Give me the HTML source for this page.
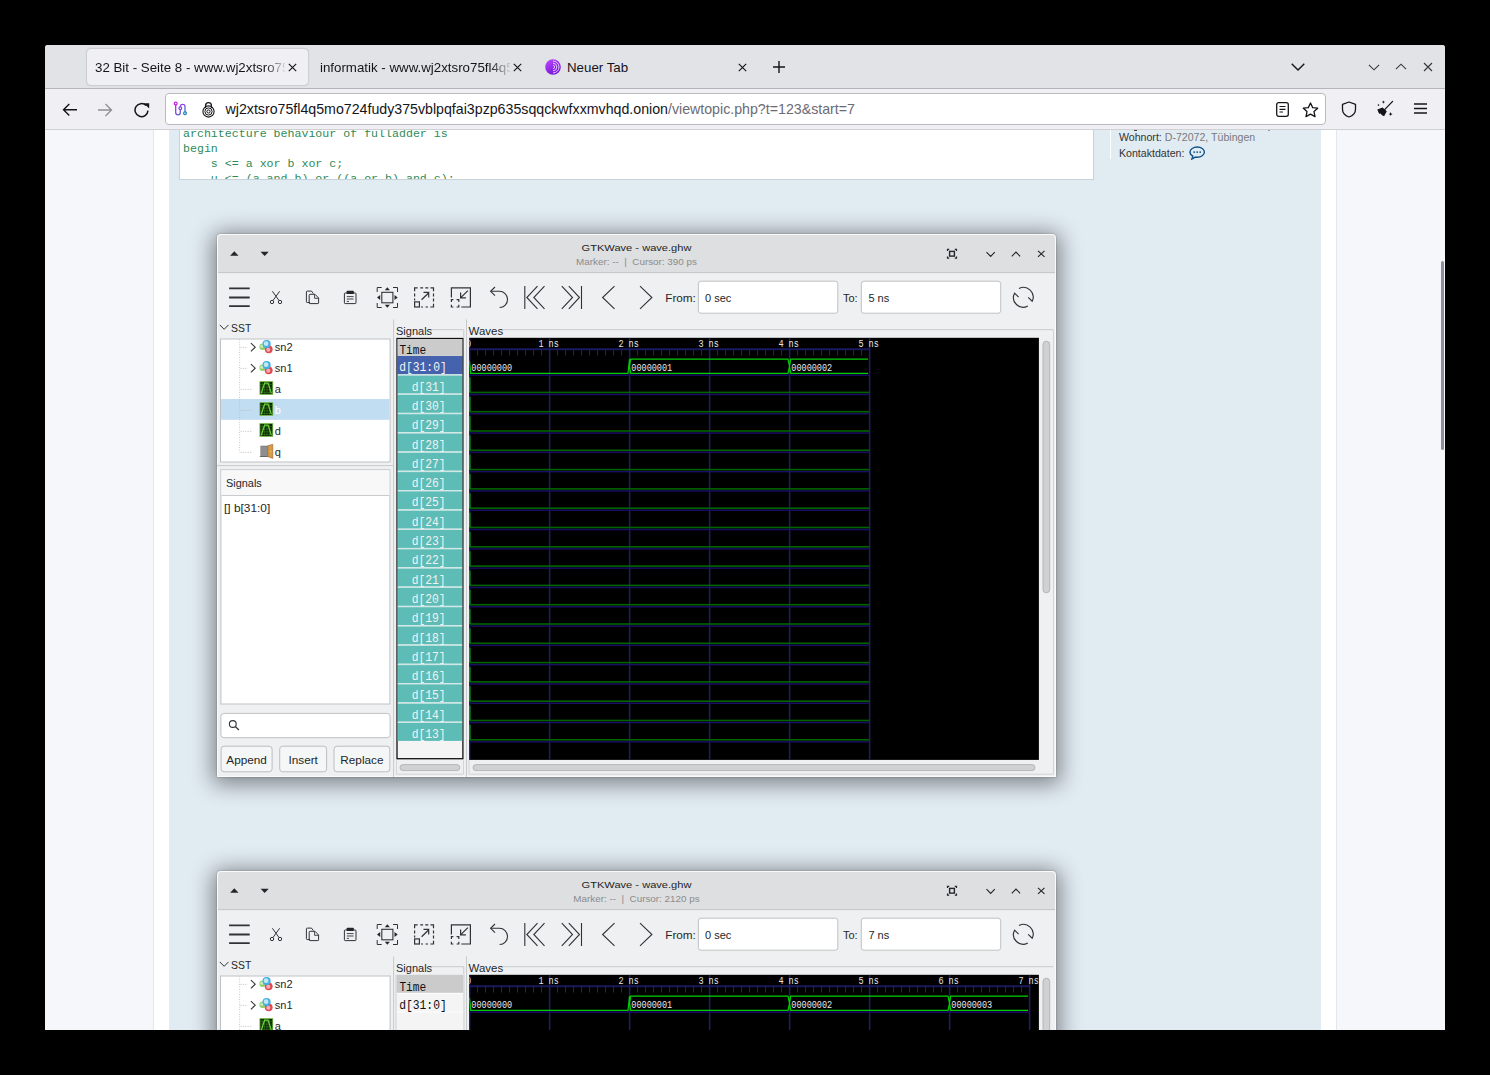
<!DOCTYPE html>
<html><head><meta charset="utf-8">
<style>
*{box-sizing:border-box}
html,body{margin:0;padding:0;width:1490px;height:1075px;overflow:hidden;background:#000}
body{font-family:"Liberation Sans",sans-serif;position:relative}
.a{position:absolute}
#win{left:45px;top:45px;width:1400px;height:985px;background:#f0f0f4;border-radius:3px 3px 0 0;overflow:hidden}
#tabs{left:0;top:0;width:1400px;height:44px;background:#e2e3e6;border-bottom:1px solid #b4b4ba;box-shadow:0 1px 1px rgba(0,0,0,.08)}
.tab{font-size:13.3px;color:#15141a;white-space:nowrap}
#act{left:42px;top:4px;width:221px;height:36px;background:#f0f0f4;border-radius:4px;box-shadow:0 0 2px rgba(0,0,0,.35)}
#tb{left:0;top:44px;width:1400px;height:41px;background:#f0f0f4;border-bottom:1px solid #cfcfd4}
#url{left:119.5px;top:4px;width:1161px;height:32px;background:#fff;border:1px solid #b9b9c0;border-radius:4px}
#page{left:0;top:85px;width:1400px;height:900px;background:#f5f7fa;overflow:hidden}
#wrap{left:108px;top:0;width:1184px;height:900px;background:#fff;border-left:1px solid #e3e6ea;border-right:1px solid #e3e6ea}
#post{left:124px;top:0;width:1152px;height:900px;background:#e1ebf2}
#code{left:134px;top:-10px;width:915px;height:60px;background:#fff;border:1px solid #c9d2d8;padding:5.4px 0 0 3px;font-family:"Liberation Mono",monospace;font-size:11.62px;color:#2e8b57;line-height:15px;white-space:pre;overflow:hidden}
.sb{left:1396px;top:131px;width:3px;height:189px;background:#8f8f9d;border-radius:2px}
</style></head><body>
<div id="win" class="a">
  <div id="tabs" class="a">
    <div id="act" class="a"></div>
    <div class="a tab" style="left:50px;top:15px;width:190px;overflow:hidden;-webkit-mask-image:linear-gradient(90deg,#000 170px,transparent 192px)">32 Bit - Seite 8 - www.wj2xtsro75fl4q5mo724</div>
    <svg class="a" style="left:243px;top:18px" width="9" height="9" viewBox="0 0 9 9"><path d="M0.8 0.8L8.2 8.2M8.2 0.8L0.8 8.2" stroke="#15141a" stroke-width="1.15"/></svg>
    <div class="a tab" style="left:275px;top:15px;width:190px;overflow:hidden;-webkit-mask-image:linear-gradient(90deg,#000 170px,transparent 192px)">informatik - www.wj2xtsro75fl4q5mo724</div>
    <svg class="a" style="left:467.5px;top:18px" width="9" height="9" viewBox="0 0 9 9"><path d="M0.8 0.8L8.2 8.2M8.2 0.8L0.8 8.2" stroke="#15141a" stroke-width="1.15"/></svg>
    <svg class="a" style="left:500px;top:14px" width="16" height="16" viewBox="0 0 16 16"><defs><linearGradient id="tg" x1="0" y1="0" x2="0.6" y2="1"><stop offset="0" stop-color="#c04cff"/><stop offset="1" stop-color="#7414d8"/></linearGradient></defs><circle cx="8" cy="8" r="7.8" fill="url(#tg)"/><path d="M8 2A6 6 0 0 1 8 14M8 4.2A3.8 3.8 0 0 1 8 11.8M8 6.4A1.6 1.6 0 0 1 8 9.6" fill="none" stroke="#e8c8ff" stroke-width="1"/></svg>
    <div class="a tab" style="left:522px;top:15px">Neuer Tab</div>
    <svg class="a" style="left:692.5px;top:18px" width="9" height="9" viewBox="0 0 9 9"><path d="M0.8 0.8L8.2 8.2M8.2 0.8L0.8 8.2" stroke="#15141a" stroke-width="1.15"/></svg>
    <svg class="a" style="left:728px;top:16px" width="12" height="12" viewBox="0 0 12 12"><path d="M6 0V12M0 6H12" stroke="#15141a" stroke-width="1.4"/></svg>
    <svg class="a" style="left:1246px;top:18px" width="14" height="8" viewBox="0 0 14 8"><path d="M0.7 0.7L7 7L13.3 0.7" fill="none" stroke="#15141a" stroke-width="1.4"/></svg>
    <svg class="a" style="left:1323px;top:19px" width="12" height="7" viewBox="0 0 12 7"><path d="M0.9 0.9L6 5.8L11.1 0.9" fill="none" stroke="#3a3a3a" stroke-width="1.15"/></svg>
    <svg class="a" style="left:1350px;top:18px" width="12" height="7" viewBox="0 0 12 7"><path d="M0.9 6.1L6 1.2L11.1 6.1" fill="none" stroke="#3a3a3a" stroke-width="1.15"/></svg>
    <svg class="a" style="left:1378px;top:17px" width="10" height="10" viewBox="0 0 10 10"><path d="M1 1L9 9M9 1L1 9" stroke="#3a3a3a" stroke-width="1.15"/></svg>
  </div>
  <div id="tb" class="a">
    <svg class="a" style="left:16.5px;top:14px" width="16" height="14" viewBox="0 0 16 14"><path d="M15 6.8H1.5M7.3 1L1.5 6.8L7.3 12.6" fill="none" stroke="#15141a" stroke-width="1.4"/></svg>
    <svg class="a" style="left:52px;top:14px" width="16" height="14" viewBox="0 0 16 14"><path d="M1 7H14.5M8.5 1L14.5 7L8.5 13" fill="none" stroke="#8e8e93" stroke-width="1.3"/></svg>
    <svg class="a" style="left:88.5px;top:13px" width="16" height="16" viewBox="0 0 16 16"><path d="M14 8.6A6.5 6.5 0 1 1 12.2 3.6" fill="none" stroke="#15141a" stroke-width="1.5"/><path d="M9.8 1.2L15.2 1.2L15.2 6.6Z" fill="#15141a"/></svg>
    <div id="url" class="a">
      <svg class="a" style="left:7.5px;top:7px" width="16" height="16" viewBox="0 0 16 16"><defs><linearGradient id="cg" x1="0" y1="0" x2="1" y2="1"><stop offset="0" stop-color="#c81ee0"/><stop offset="0.5" stop-color="#7d4ee0"/><stop offset="1" stop-color="#1a7fc0"/></linearGradient></defs><path d="M2.7 3.5V11.5A2.3 2.3 0 0 0 7.3 11.5V5.2A2.4 2.4 0 0 1 12 5.2V11.5" fill="none" stroke="url(#cg)" stroke-width="1.3"/><circle cx="2.7" cy="2.5" r="1.4" fill="#fff" stroke="#c81ee0" stroke-width="1.2"/><circle cx="7.3" cy="7.3" r="1.4" fill="#fff" stroke="#7d4ee0" stroke-width="1.2"/><circle cx="12" cy="12.2" r="1.4" fill="#fff" stroke="#1a7fc0" stroke-width="1.2"/></svg>
      <svg class="a" style="left:36px;top:6.5px" width="13" height="17" viewBox="0 0 13 17"><path d="M3.6 7V4.5A2.9 2.9 0 0 1 9.4 4.5V7" fill="none" stroke="#15141a" stroke-width="1.3"/><circle cx="6.5" cy="10.5" r="5.6" fill="none" stroke="#15141a" stroke-width="1.1"/><circle cx="6.5" cy="10.5" r="3.6" fill="none" stroke="#15141a" stroke-width="1"/><circle cx="6.5" cy="10.5" r="1.6" fill="none" stroke="#15141a" stroke-width="1"/></svg>
      <div class="a" style="left:60px;top:7px;font-size:14.2px;color:#15141a;white-space:nowrap">wj2xtsro75fl4q5mo724fudy375vblpqfai3pzp635sqqckwfxxmvhqd.onion<span style="color:#6b6b74">/viewtopic.php?t=123&amp;start=7</span></div>
      <svg class="a" style="left:1110px;top:7.5px" width="13" height="15" viewBox="0 0 13 15"><rect x="0.7" y="0.7" width="11.6" height="13.6" rx="2" fill="none" stroke="#15141a" stroke-width="1.3"/><path d="M3.5 4.5H9.5M3.5 7.3H9.5M3.5 10H7" stroke="#15141a" stroke-width="1.2"/></svg>
      <svg class="a" style="left:1136px;top:7.5px" width="17" height="16" viewBox="0 0 17 16"><path d="M8.5 1L10.7 5.6L15.7 6.2L12 9.6L13 14.6L8.5 12.1L4 14.6L5 9.6L1.3 6.2L6.3 5.6Z" fill="none" stroke="#15141a" stroke-width="1.3" stroke-linejoin="round"/></svg>
    </div>
    <svg class="a" style="left:1296px;top:11.5px" width="16" height="17" viewBox="0 0 16 17"><path d="M8 1L14.5 3.3V8.2C14.5 12 11.5 14.8 8 16C4.5 14.8 1.5 12 1.5 8.2V3.3Z" fill="none" stroke="#15141a" stroke-width="1.3" stroke-linejoin="round"/></svg>
    <svg class="a" style="left:1331px;top:11px" width="18" height="18" viewBox="0 0 18 18"><path d="M16.6 1.4L8.6 9.6" stroke="#15141a" stroke-width="1.3" stroke-linecap="round"/><path d="M1.3 9.6L6.6 7.4L10.8 11.3L8.1 16.2L5.6 15L4.9 13.6L3.6 14L2.5 12.4Z" fill="#15141a"/><path d="M7.4 0.4L7.9 1.6L9.1 2.1L7.9 2.6L7.4 3.8L6.9 2.6L5.7 2.1L6.9 1.6Z M14.6 12.1L15.2 13.5L16.6 14.1L15.2 14.7L14.6 16.1L14 14.7L12.6 14.1L14 13.5Z" fill="#15141a"/><circle cx="2.5" cy="5.1" r="0.8" fill="#15141a"/></svg>
    <svg class="a" style="left:1369px;top:14px" width="13" height="11" viewBox="0 0 13 11"><path d="M0 1H13M0 5.5H13M0 10H13" stroke="#15141a" stroke-width="1.3"/></svg>
  </div>
  <div id="page" class="a">
    <div id="wrap" class="a"></div>
    <div id="post" class="a"></div>
    <div id="code" class="a">architecture behaviour of fulladder is
begin
    s &lt;= a xor b xor c;
    u &lt;= (a and b) or ((a or b) and c);
end behaviour;</div>
    <div class="a" style="left:1065px;top:0;width:1px;height:28.6px;background:#fff"></div><div class="a" style="left:1088.5px;top:0;width:3.5px;height:1.2px;background:#444"></div><div class="a" style="left:1223px;top:0;width:2px;height:1px;background:#999"></div>
    <div class="a" style="left:1074px;top:1.3px;font-size:10.6px;color:#333;white-space:nowrap;line-height:12px">Wohnort: <span style="color:#7a7a7a">D-72072, Tübingen</span></div>
    <div class="a" style="left:1074px;top:17.3px;font-size:10.6px;color:#333;white-space:nowrap;line-height:12px">Kontaktdaten:</div>
    <svg class="a" style="left:1143.5px;top:16px" width="17" height="14" viewBox="0 0 17 14"><path d="M8.2 1C4.3 1 1 3.3 1 6.1C1 7.8 2.1 9.3 3.8 10.2L2.9 13L6.4 11.1C7 11.2 7.6 11.3 8.2 11.3C12.1 11.3 15.4 9 15.4 6.1C15.4 3.3 12.1 1 8.2 1Z" fill="none" stroke="#105289" stroke-width="1.4"/><circle cx="5.2" cy="6.1" r="0.95" fill="#105289"/><circle cx="8.2" cy="6.1" r="0.95" fill="#105289"/><circle cx="11.2" cy="6.1" r="0.95" fill="#105289"/></svg>
    <div class="a sb"></div>
  </div>
</div>


<div class="a" style="left:45px;top:130px;width:1400px;height:900px;overflow:hidden"><div class="a" style="left:-45px;top:-130px;width:1490px;height:1075px"><div class="a" style="left:217px;top:234px;width:839px;height:543px;background:#eff0f1;box-shadow:0 0 2px rgba(0,0,0,.35),0 3px 22px 4px rgba(0,0,0,.45);border-radius:4px 4px 0 0"></div>
<svg class="a" style="left:217px;top:234px" width="839" height="543" viewBox="0 0 839 543"><path d="M0 4A4 4 0 0 1 4 0H835A4 4 0 0 1 839 4V38.6H0Z" fill="#dedfe0"/><rect x="0" y="38.1" width="839" height="1" fill="#c4c5c7"/><path d="M0.5 542.5V4A3.5 3.5 0 0 1 4 0.5H835A3.5 3.5 0 0 1 838.5 4V542.5Z" stroke="#fafafa" stroke-width="1" fill="none"/><text transform="translate(419.5,17) scale(1.145,1)" font-family='"Liberation Sans",sans-serif' font-size="9.7" fill="#232629" text-anchor="middle" xml:space="preserve">GTKWave - wave.ghw</text><text transform="translate(419.5,30.8) scale(1.06,1)" font-family='"Liberation Sans",sans-serif' font-size="9.3" fill="#8a8c8e" text-anchor="middle" xml:space="preserve">Marker: --  |  Cursor: 390 ps</text><path d="M13.1 21.8L17.3 17.3L21.5 21.8Z" fill="#232629"/><path d="M43.6 17.8L51.7 17.8L47.65 22.1Z" fill="#232629"/><path d="M730.5 17V15.3H732.2M737.8 15.3H739.5V17M739.5 22.5V24.2H737.8M732.2 24.2H730.5V22.5" fill="none" stroke="#232629" stroke-width="1.2"/><rect x="732.6" y="17.4" width="4.8" height="4.7" fill="none" stroke="#232629" stroke-width="1.4"/><path d="M769.5 18.1L773.65 22.4L777.8 18.1" fill="none" stroke="#232629" stroke-width="1.1"/><path d="M794.8 22.3L798.95 18L803.1 22.3" fill="none" stroke="#232629" stroke-width="1.1"/><path d="M821 16.8L827.5 22.9M827.5 16.8L821 22.9" fill="none" stroke="#232629" stroke-width="1.1"/><path d="M12.1 54.4H32.7M12.1 63.5H32.7M12.1 72.2H32.7" fill="none" stroke="#2f3337" stroke-width="1.8"/><circle cx="55" cy="68" r="1.7" fill="none" stroke="#2f3337" stroke-width="1"/><circle cx="63" cy="68" r="1.7" fill="none" stroke="#2f3337" stroke-width="1"/><path d="M56 66.5L62.6 57.3M62 66.5L55.4 57.3" fill="none" stroke="#2f3337" stroke-width="1"/><path d="M93 68.5H90.2Q89.4 68.5 89.4 67.7V57.7Q89.4 57.1 90.2 57.1H94.5L96.3 59.5" fill="none" stroke="#2f3337" stroke-width="1"/><path d="M92.2 61.3Q92.2 60.3 93 60.3H98L101.6 64V68.9Q101.6 69.6 100.9 69.6H93Q92.2 69.6 92.2 68.9Z" fill="none" stroke="#2f3337" stroke-width="1"/><path d="M97.6 60.5V64.3H101.5" fill="none" stroke="#2f3337" stroke-width="0.9"/><rect x="127.4" y="59" width="11.6" height="10.6" rx="0.8" fill="none" stroke="#2f3337" stroke-width="1"/><rect x="129.6" y="56.8" width="7.2" height="3.2" rx="0.8" fill="#232629"/><path d="M129.8 62.6H136.6M129.8 65H136.6M129.8 67.4H132" fill="none" stroke="#2f3337" stroke-width="0.9"/><path d="M160.2 58V53.5H164.7M176 53.5H180.5V58M180.5 69V73.5H176M164.7 73.5H160.2V69" fill="none" stroke="#2f3337" stroke-width="1"/><rect x="164.8" y="58.3" width="11.1" height="10.5" fill="none" stroke="#2f3337" stroke-width="1.1"/><path d="M167.8 56.3L170.35 53.2L172.9 56.3ZM167.8 70.7L170.35 73.8L172.9 70.7ZM163.2 61L160 63.5L163.2 66ZM177.5 61L180.7 63.5L177.5 66Z" fill="#232629"/><path d="M197.6 57.3V53.9H200.6M203.3 53.9H206.1M208.3 53.9H211.3M213.5 53.9H216.5V57.3M216.5 59.5V62.5M216.5 64.5V67.5M216.5 69.8V73H213.3M211 73H208.5M206 73H204M197.6 59.5V62.5M197.6 64.5V66.5" fill="none" stroke="#2f3337" stroke-width="1.2"/><rect x="197.6" y="67.9" width="4.8" height="5.1" fill="none" stroke="#2f3337" stroke-width="1.2"/><path d="M204.6 65.8L211.3 59.2M206.5 58.3H211.7V63.5" fill="none" stroke="#2f3337" stroke-width="1.2"/><path d="M234.4 63.4V53.9H253.4V73H244.3" fill="none" stroke="#2f3337" stroke-width="1.2"/><path d="M234.4 68V65.6H236.4M239.6 65.6H241.8V68M241.8 70.8V73H239.6M236.4 73H234.4V70.8" fill="none" stroke="#2f3337" stroke-width="1.2"/><path d="M250.9 56.6L244.3 63.2M243.6 58.4V63.8H248.9" fill="none" stroke="#2f3337" stroke-width="1.2"/><path d="M273.8 57.3H282.3A8.1 8.1 0 0 1 282.6 73.5" fill="none" stroke="#2f3337" stroke-width="1.1"/><path d="M278 53L273.6 57.3L278 61.6" fill="none" stroke="#2f3337" stroke-width="1.1"/><path d="M307.8 51.9V75.1M320.5 52.2L309.8 63.5L320.5 74.8M327.5 52.2L316.8 63.5L327.5 74.8" fill="none" stroke="#2f3337" stroke-width="1.1"/><path d="M364.5 51.9V75.1M351.8 52.2L362.5 63.5L351.8 74.8M344.8 52.2L355.5 63.5L344.8 74.8" fill="none" stroke="#2f3337" stroke-width="1.1"/><path d="M397.5 52.2L385.6 63.5L397.5 74.8" fill="none" stroke="#2f3337" stroke-width="1.1"/><path d="M423 52.2L434.9 63.5L423 74.8" fill="none" stroke="#2f3337" stroke-width="1.1"/><text transform="translate(448.2,67.9) scale(1.07,1)" font-family='"Liberation Sans",sans-serif' font-size="11" fill="#232629" xml:space="preserve">From:</text><rect x="481.4" y="47.2" width="139.4" height="32" rx="2.5" fill="#fff" stroke="#bfc1c3" stroke-width="1"/><text x="488" y="67.9" font-family='"Liberation Sans",sans-serif' font-size="11" fill="#232629">0 sec</text><text x="626" y="67.9" font-family='"Liberation Sans",sans-serif' font-size="11" fill="#232629">To:</text><rect x="644.3" y="47.2" width="139.4" height="32" rx="2.5" fill="#fff" stroke="#bfc1c3" stroke-width="1"/><text x="651.4" y="67.9" font-family='"Liberation Sans",sans-serif' font-size="11" fill="#232629">5 ns</text><path d="M802 54.6A9.6 9.6 0 0 1 815.2 67.2L811.2 63.3M810.8 72A9.6 9.6 0 0 1 797.6 59.2L801.6 63.1" fill="none" stroke="#2f3337" stroke-width="1.15" stroke-linejoin="miter"/><rect x="176.1" y="85.4" width="1" height="457.6" fill="#c8c9ca"/><rect x="249" y="85.4" width="1" height="457.6" fill="#c8c9ca"/><path d="M2.8 90.9L7.15 95.3L11.5 90.9" fill="none" stroke="#2f3337" stroke-width="1"/><text x="14.1" y="97.8" font-family='"Liberation Sans",sans-serif' font-size="10.4" fill="#232629">SST</text><rect x="3.5" y="105" width="169.6" height="123" fill="#fff" stroke="#bfc1c3" stroke-width="1"/><rect x="4" y="165" width="168.6" height="20.8" fill="#c1ddf2"/><path d="M22.6 105.5V218.4" stroke="#bdbdbd" stroke-width="0.8" stroke-dasharray="1 1.5"/><path d="M23.5 113.4H30" stroke="#bdbdbd" stroke-width="0.8" stroke-dasharray="1.2 1.2"/><path d="M33.9 109.1L38.2 113.2L33.9 117.3" fill="none" stroke="#2f3337" stroke-width="1.1"/><circle cx="45.6" cy="112.8" r="3.2" fill="#8fcf6a"/><circle cx="44.9" cy="112.2" r="1.6" fill="#cdebb5"/><circle cx="51.7" cy="115.3" r="3.9" fill="#e24a52"/><circle cx="51.3" cy="115.8" r="2" fill="#f5b0b5"/><circle cx="49.6" cy="110.1" r="4.1" fill="#45afe2"/><circle cx="49.1" cy="109.7" r="2.4" fill="#c2e8f8"/><text x="57.8" y="117.1" font-family='"Liberation Sans",sans-serif' font-size="11" fill="#232629">sn2</text><path d="M23.5 134.4H30" stroke="#bdbdbd" stroke-width="0.8" stroke-dasharray="1.2 1.2"/><path d="M33.9 130.1L38.2 134.2L33.9 138.3" fill="none" stroke="#2f3337" stroke-width="1.1"/><circle cx="45.6" cy="133.8" r="3.2" fill="#8fcf6a"/><circle cx="44.9" cy="133.2" r="1.6" fill="#cdebb5"/><circle cx="51.7" cy="136.3" r="3.9" fill="#e24a52"/><circle cx="51.3" cy="136.8" r="2" fill="#f5b0b5"/><circle cx="49.6" cy="131.1" r="4.1" fill="#45afe2"/><circle cx="49.1" cy="130.7" r="2.4" fill="#c2e8f8"/><text x="57.8" y="138.1" font-family='"Liberation Sans",sans-serif' font-size="11" fill="#232629">sn1</text><path d="M23.5 155.4H35" stroke="#bdbdbd" stroke-width="0.8" stroke-dasharray="1.2 1.2"/><rect x="42.9" y="147.6" width="12.9" height="12.8" fill="#0a2404" stroke="#78c24a" stroke-width="0.8"/><path d="M45.2 147.9V160.2M47.6 147.9V160.2M50 147.9V160.2M52.4 147.9V160.2M43.2 150.4H55.6M43.2 153.1H55.6M43.2 155.8H55.6M43.2 158.4H55.6" stroke="#3b7a22" stroke-width="0.6"/><path d="M44.2 159.4L47.6 149.2H51.1L54.4 159.4" fill="none" stroke="#6ad43a" stroke-width="1.2"/><text x="57.8" y="159.1" font-family='"Liberation Sans",sans-serif' font-size="11" fill="#232629">a</text><path d="M23.5 176.4H35" stroke="#bdbdbd" stroke-width="0.8" stroke-dasharray="1.2 1.2"/><rect x="42.9" y="168.6" width="12.9" height="12.8" fill="#0a2404" stroke="#78c24a" stroke-width="0.8"/><path d="M45.2 168.9V181.2M47.6 168.9V181.2M50 168.9V181.2M52.4 168.9V181.2M43.2 171.4H55.6M43.2 174.1H55.6M43.2 176.8H55.6M43.2 179.4H55.6" stroke="#3b7a22" stroke-width="0.6"/><path d="M44.2 180.4L47.6 170.2H51.1L54.4 180.4" fill="none" stroke="#6ad43a" stroke-width="1.2"/><text x="57.8" y="180.1" font-family='"Liberation Sans",sans-serif' font-size="11" fill="#ffffff">b</text><path d="M23.5 197.4H35" stroke="#bdbdbd" stroke-width="0.8" stroke-dasharray="1.2 1.2"/><rect x="42.9" y="189.6" width="12.9" height="12.8" fill="#0a2404" stroke="#78c24a" stroke-width="0.8"/><path d="M45.2 189.9V202.2M47.6 189.9V202.2M50 189.9V202.2M52.4 189.9V202.2M43.2 192.4H55.6M43.2 195.1H55.6M43.2 197.8H55.6M43.2 200.4H55.6" stroke="#3b7a22" stroke-width="0.6"/><path d="M44.2 201.4L47.6 191.2H51.1L54.4 201.4" fill="none" stroke="#6ad43a" stroke-width="1.2"/><text x="57.8" y="201.1" font-family='"Liberation Sans",sans-serif' font-size="11" fill="#232629">d</text><path d="M23.5 218.4H35" stroke="#bdbdbd" stroke-width="0.8" stroke-dasharray="1.2 1.2"/><rect x="43.8" y="212" width="7" height="10.3" fill="#8e8e8e" stroke="#6a6a6a" stroke-width="0.5"/><path d="M50.8 211.6L55.8 210.4V224.4L50.8 222.6Z" fill="#d89a4c" stroke="#9a6428" stroke-width="0.6"/><circle cx="53.6" cy="217.4" r="0.6" fill="#f5d640"/><rect x="42.8" y="222" width="8" height="0.8" fill="#555"/><text x="57.8" y="222.1" font-family='"Liberation Sans",sans-serif' font-size="11" fill="#232629">q</text><rect x="0" y="231.1" width="176" height="1" fill="#c8c9ca"/><rect x="3.9" y="235.8" width="169" height="234.2" fill="#fff" stroke="#bfc1c3" stroke-width="1"/><rect x="4.4" y="236.3" width="168" height="25" fill="#f8f8f9"/><rect x="4.4" y="261" width="168" height="1" fill="#c9cbcc"/><text transform="translate(9,253) scale(1.04,1)" font-family='"Liberation Sans",sans-serif' font-size="10.5" fill="#232629" xml:space="preserve">Signals</text><text transform="translate(7,277.8) scale(1.1,1)" font-family='"Liberation Sans",sans-serif' font-size="10.8" fill="#232629" xml:space="preserve">[] b[31:0]</text><rect x="3.9" y="479.4" width="169.2" height="24.3" rx="3" fill="#fff" stroke="#bfc1c3" stroke-width="1"/><circle cx="15.8" cy="490" r="3.4" fill="none" stroke="#2f3337" stroke-width="1.1"/><path d="M18.3 492.5L21.9 496" fill="none" stroke="#2f3337" stroke-width="1.2"/><rect x="4.1" y="512.2" width="51" height="25.6" rx="3" fill="#f5f6f6" stroke="#bcbebf" stroke-width="1"/><text transform="translate(29.6,529.8) scale(1.1,1)" font-family='"Liberation Sans",sans-serif' font-size="10.7" fill="#232629" text-anchor="middle" xml:space="preserve">Append</text><rect x="62.7" y="512.2" width="46.9" height="25.6" rx="3" fill="#f5f6f6" stroke="#bcbebf" stroke-width="1"/><text transform="translate(86.15,529.8) scale(1.1,1)" font-family='"Liberation Sans",sans-serif' font-size="10.7" fill="#232629" text-anchor="middle" xml:space="preserve">Insert</text><rect x="117" y="512.2" width="55.8" height="25.6" rx="3" fill="#f5f6f6" stroke="#bcbebf" stroke-width="1"/><text transform="translate(144.9,529.8) scale(1.1,1)" font-family='"Liberation Sans",sans-serif' font-size="10.7" fill="#232629" text-anchor="middle" xml:space="preserve">Replace</text><path d="M214 95.7H246.8V103.5" fill="none" stroke="#c9cacb" stroke-width="1"/><text transform="translate(179,100.6) scale(1.06,1)" font-family='"Liberation Sans",sans-serif' font-size="10.4" fill="#232629" xml:space="preserve">Signals</text><path d="M286 95.7H836" fill="none" stroke="#c9cacb" stroke-width="1"/><text transform="translate(251.6,100.6) scale(1.1,1)" font-family='"Liberation Sans",sans-serif' font-size="10.4" fill="#232629" xml:space="preserve">Waves</text><rect x="180" y="104.5" width="65.9" height="420.2" fill="#f4f4f4" stroke="#111" stroke-width="1.3"/><rect x="180.6" y="105.1" width="64.7" height="16.8" fill="#cbcbcb"/><text transform="translate(182.4,119.9) scale(0.93,1)" font-family='"Liberation Mono",monospace' font-size="12" fill="#111" xml:space="preserve">Time</text><rect x="180.6" y="122" width="64.7" height="18.3" fill="#4562ae"/><text transform="translate(182.2,137) scale(0.944,1)" font-family='"Liberation Mono",monospace' font-size="12" fill="#f4f4f4" xml:space="preserve">d[31:0]</text><rect x="180.6" y="140.3" width="64.7" height="1.3" fill="#cfe8e6"/><rect x="180.6" y="141.6" width="64.7" height="17.9" fill="#5ebcb7"/><rect x="180.6" y="159.6" width="64.7" height="1.3" fill="#cfe8e6"/><text transform="translate(194.7,156.6) scale(0.944,1)" font-family='"Liberation Mono",monospace' font-size="12" fill="#f2f2f2" xml:space="preserve">d[31]</text><rect x="180.6" y="160.9" width="64.7" height="17.9" fill="#5ebcb7"/><rect x="180.6" y="178.9" width="64.7" height="1.3" fill="#cfe8e6"/><text transform="translate(194.7,175.9) scale(0.944,1)" font-family='"Liberation Mono",monospace' font-size="12" fill="#f2f2f2" xml:space="preserve">d[30]</text><rect x="180.6" y="180.2" width="64.7" height="17.9" fill="#5ebcb7"/><rect x="180.6" y="198.2" width="64.7" height="1.3" fill="#cfe8e6"/><text transform="translate(194.7,195.2) scale(0.944,1)" font-family='"Liberation Mono",monospace' font-size="12" fill="#f2f2f2" xml:space="preserve">d[29]</text><rect x="180.6" y="199.5" width="64.7" height="17.9" fill="#5ebcb7"/><rect x="180.6" y="217.5" width="64.7" height="1.3" fill="#cfe8e6"/><text transform="translate(194.7,214.5) scale(0.944,1)" font-family='"Liberation Mono",monospace' font-size="12" fill="#f2f2f2" xml:space="preserve">d[28]</text><rect x="180.6" y="218.8" width="64.7" height="17.9" fill="#5ebcb7"/><rect x="180.6" y="236.8" width="64.7" height="1.3" fill="#cfe8e6"/><text transform="translate(194.7,233.8) scale(0.944,1)" font-family='"Liberation Mono",monospace' font-size="12" fill="#f2f2f2" xml:space="preserve">d[27]</text><rect x="180.6" y="238.1" width="64.7" height="17.9" fill="#5ebcb7"/><rect x="180.6" y="256.1" width="64.7" height="1.3" fill="#cfe8e6"/><text transform="translate(194.7,253.1) scale(0.944,1)" font-family='"Liberation Mono",monospace' font-size="12" fill="#f2f2f2" xml:space="preserve">d[26]</text><rect x="180.6" y="257.4" width="64.7" height="17.9" fill="#5ebcb7"/><rect x="180.6" y="275.4" width="64.7" height="1.3" fill="#cfe8e6"/><text transform="translate(194.7,272.4) scale(0.944,1)" font-family='"Liberation Mono",monospace' font-size="12" fill="#f2f2f2" xml:space="preserve">d[25]</text><rect x="180.6" y="276.7" width="64.7" height="17.9" fill="#5ebcb7"/><rect x="180.6" y="294.7" width="64.7" height="1.3" fill="#cfe8e6"/><text transform="translate(194.7,291.7) scale(0.944,1)" font-family='"Liberation Mono",monospace' font-size="12" fill="#f2f2f2" xml:space="preserve">d[24]</text><rect x="180.6" y="296" width="64.7" height="17.9" fill="#5ebcb7"/><rect x="180.6" y="314" width="64.7" height="1.3" fill="#cfe8e6"/><text transform="translate(194.7,311) scale(0.944,1)" font-family='"Liberation Mono",monospace' font-size="12" fill="#f2f2f2" xml:space="preserve">d[23]</text><rect x="180.6" y="315.3" width="64.7" height="17.9" fill="#5ebcb7"/><rect x="180.6" y="333.3" width="64.7" height="1.3" fill="#cfe8e6"/><text transform="translate(194.7,330.3) scale(0.944,1)" font-family='"Liberation Mono",monospace' font-size="12" fill="#f2f2f2" xml:space="preserve">d[22]</text><rect x="180.6" y="334.6" width="64.7" height="17.9" fill="#5ebcb7"/><rect x="180.6" y="352.6" width="64.7" height="1.3" fill="#cfe8e6"/><text transform="translate(194.7,349.6) scale(0.944,1)" font-family='"Liberation Mono",monospace' font-size="12" fill="#f2f2f2" xml:space="preserve">d[21]</text><rect x="180.6" y="353.9" width="64.7" height="17.9" fill="#5ebcb7"/><rect x="180.6" y="371.9" width="64.7" height="1.3" fill="#cfe8e6"/><text transform="translate(194.7,368.9) scale(0.944,1)" font-family='"Liberation Mono",monospace' font-size="12" fill="#f2f2f2" xml:space="preserve">d[20]</text><rect x="180.6" y="373.2" width="64.7" height="17.9" fill="#5ebcb7"/><rect x="180.6" y="391.2" width="64.7" height="1.3" fill="#cfe8e6"/><text transform="translate(194.7,388.2) scale(0.944,1)" font-family='"Liberation Mono",monospace' font-size="12" fill="#f2f2f2" xml:space="preserve">d[19]</text><rect x="180.6" y="392.5" width="64.7" height="17.9" fill="#5ebcb7"/><rect x="180.6" y="410.5" width="64.7" height="1.3" fill="#cfe8e6"/><text transform="translate(194.7,407.5) scale(0.944,1)" font-family='"Liberation Mono",monospace' font-size="12" fill="#f2f2f2" xml:space="preserve">d[18]</text><rect x="180.6" y="411.8" width="64.7" height="17.9" fill="#5ebcb7"/><rect x="180.6" y="429.8" width="64.7" height="1.3" fill="#cfe8e6"/><text transform="translate(194.7,426.8) scale(0.944,1)" font-family='"Liberation Mono",monospace' font-size="12" fill="#f2f2f2" xml:space="preserve">d[17]</text><rect x="180.6" y="431.1" width="64.7" height="17.9" fill="#5ebcb7"/><rect x="180.6" y="449.1" width="64.7" height="1.3" fill="#cfe8e6"/><text transform="translate(194.7,446.1) scale(0.944,1)" font-family='"Liberation Mono",monospace' font-size="12" fill="#f2f2f2" xml:space="preserve">d[16]</text><rect x="180.6" y="450.4" width="64.7" height="17.9" fill="#5ebcb7"/><rect x="180.6" y="468.4" width="64.7" height="1.3" fill="#cfe8e6"/><text transform="translate(194.7,465.4) scale(0.944,1)" font-family='"Liberation Mono",monospace' font-size="12" fill="#f2f2f2" xml:space="preserve">d[15]</text><rect x="180.6" y="469.7" width="64.7" height="17.9" fill="#5ebcb7"/><rect x="180.6" y="487.7" width="64.7" height="1.3" fill="#cfe8e6"/><text transform="translate(194.7,484.7) scale(0.944,1)" font-family='"Liberation Mono",monospace' font-size="12" fill="#f2f2f2" xml:space="preserve">d[14]</text><rect x="180.6" y="489" width="64.7" height="17.9" fill="#5ebcb7"/><text transform="translate(194.7,504) scale(0.944,1)" font-family='"Liberation Mono",monospace' font-size="12" fill="#f2f2f2" xml:space="preserve">d[13]</text><defs><clipPath id="wc1"><rect x="252.3" y="103.8" width="569.6" height="422.1"/></clipPath></defs><rect x="252.3" y="103.8" width="569.6" height="422.1" fill="#000"/><g clip-path="url(#wc1)"><rect x="251.9" y="103.8" width="1.5" height="422.1" fill="#1e1e66"/><rect x="331.9" y="103.8" width="1.5" height="422.1" fill="#1e1e66"/><rect x="411.9" y="103.8" width="1.5" height="422.1" fill="#1e1e66"/><rect x="491.9" y="103.8" width="1.5" height="422.1" fill="#1e1e66"/><rect x="571.9" y="103.8" width="1.5" height="422.1" fill="#1e1e66"/><rect x="651.9" y="103.8" width="1.5" height="422.1" fill="#1e1e66"/><rect x="252.5" y="114.3" width="400" height="1.9" fill="#1a1a62"/><path d="M252.5 115.5V121.6M260.5 115.5V121.6M268.5 115.5V121.6M276.5 115.5V121.6M284.5 115.5V121.6M292.5 115.5V121.6M300.5 115.5V121.6M308.5 115.5V121.6M316.5 115.5V121.6M324.5 115.5V121.6M332.5 115.5V121.6M340.5 115.5V121.6M348.5 115.5V121.6M356.5 115.5V121.6M364.5 115.5V121.6M372.5 115.5V121.6M380.5 115.5V121.6M388.5 115.5V121.6M396.5 115.5V121.6M404.5 115.5V121.6M412.5 115.5V121.6M420.5 115.5V121.6M428.5 115.5V121.6M436.5 115.5V121.6M444.5 115.5V121.6M452.5 115.5V121.6M460.5 115.5V121.6M468.5 115.5V121.6M476.5 115.5V121.6M484.5 115.5V121.6M492.5 115.5V121.6M500.5 115.5V121.6M508.5 115.5V121.6M516.5 115.5V121.6M524.5 115.5V121.6M532.5 115.5V121.6M540.5 115.5V121.6M548.5 115.5V121.6M556.5 115.5V121.6M564.5 115.5V121.6M572.5 115.5V121.6M580.5 115.5V121.6M588.5 115.5V121.6M596.5 115.5V121.6M604.5 115.5V121.6M612.5 115.5V121.6M620.5 115.5V121.6M628.5 115.5V121.6M636.5 115.5V121.6M644.5 115.5V121.6M652.5 115.5V121.6" stroke="#1e1e70" stroke-width="1.1"/><text transform="translate(251.6,113) scale(0.81,1)" font-family='"Liberation Mono",monospace' font-size="10.5" fill="#e6e6e6" text-anchor="middle" xml:space="preserve">0</text><text transform="translate(331.6,113) scale(0.81,1)" font-family='"Liberation Mono",monospace' font-size="10.5" fill="#e6e6e6" text-anchor="middle" xml:space="preserve">1 ns</text><text transform="translate(411.6,113) scale(0.81,1)" font-family='"Liberation Mono",monospace' font-size="10.5" fill="#e6e6e6" text-anchor="middle" xml:space="preserve">2 ns</text><text transform="translate(491.6,113) scale(0.81,1)" font-family='"Liberation Mono",monospace' font-size="10.5" fill="#e6e6e6" text-anchor="middle" xml:space="preserve">3 ns</text><text transform="translate(571.6,113) scale(0.81,1)" font-family='"Liberation Mono",monospace' font-size="10.5" fill="#e6e6e6" text-anchor="middle" xml:space="preserve">4 ns</text><text transform="translate(651.6,113) scale(0.81,1)" font-family='"Liberation Mono",monospace' font-size="10.5" fill="#e6e6e6" text-anchor="middle" xml:space="preserve">5 ns</text><text transform="translate(254.3,136.6) scale(0.775,1)" font-family='"Liberation Mono",monospace' font-size="11" fill="#ececec" xml:space="preserve">00000000</text><text transform="translate(414.3,136.6) scale(0.775,1)" font-family='"Liberation Mono",monospace' font-size="11" fill="#ececec" xml:space="preserve">00000001</text><text transform="translate(574.3,136.6) scale(0.775,1)" font-family='"Liberation Mono",monospace' font-size="11" fill="#ececec" xml:space="preserve">00000002</text><path d="M252.5 126.7L253.7 139.4H411L412.5 125.2M412.5 132.3L413.7 125.2H571L572.5 132.3M412.5 132.3L413.7 139.4H571L572.5 132.3M572.5 132.3L573.7 125.2H651M572.5 132.3L573.7 139.4H651" fill="none" stroke="#00d000" stroke-width="1.2"/><rect x="252.5" y="140.4" width="400" height="1.5" fill="#180e62"/><rect x="252.5" y="157.6" width="400" height="1.6" fill="#006400"/><rect x="252.2" y="143.6" width="1.2" height="14.6" fill="#00d000"/><rect x="252.5" y="159.7" width="400" height="1.5" fill="#180e62"/><rect x="252.5" y="176.9" width="400" height="1.6" fill="#006400"/><rect x="252.2" y="162.9" width="1.2" height="14.6" fill="#00d000"/><rect x="252.5" y="179" width="400" height="1.5" fill="#180e62"/><rect x="252.5" y="196.2" width="400" height="1.6" fill="#006400"/><rect x="252.2" y="182.2" width="1.2" height="14.6" fill="#00d000"/><rect x="252.5" y="198.3" width="400" height="1.5" fill="#180e62"/><rect x="252.5" y="215.5" width="400" height="1.6" fill="#006400"/><rect x="252.2" y="201.5" width="1.2" height="14.6" fill="#00d000"/><rect x="252.5" y="217.6" width="400" height="1.5" fill="#180e62"/><rect x="252.5" y="234.8" width="400" height="1.6" fill="#006400"/><rect x="252.2" y="220.8" width="1.2" height="14.6" fill="#00d000"/><rect x="252.5" y="236.9" width="400" height="1.5" fill="#180e62"/><rect x="252.5" y="254.1" width="400" height="1.6" fill="#006400"/><rect x="252.2" y="240.1" width="1.2" height="14.6" fill="#00d000"/><rect x="252.5" y="256.2" width="400" height="1.5" fill="#180e62"/><rect x="252.5" y="273.4" width="400" height="1.6" fill="#006400"/><rect x="252.2" y="259.4" width="1.2" height="14.6" fill="#00d000"/><rect x="252.5" y="275.5" width="400" height="1.5" fill="#180e62"/><rect x="252.5" y="292.7" width="400" height="1.6" fill="#006400"/><rect x="252.2" y="278.7" width="1.2" height="14.6" fill="#00d000"/><rect x="252.5" y="294.8" width="400" height="1.5" fill="#180e62"/><rect x="252.5" y="312" width="400" height="1.6" fill="#006400"/><rect x="252.2" y="298" width="1.2" height="14.6" fill="#00d000"/><rect x="252.5" y="314.1" width="400" height="1.5" fill="#180e62"/><rect x="252.5" y="331.3" width="400" height="1.6" fill="#006400"/><rect x="252.2" y="317.3" width="1.2" height="14.6" fill="#00d000"/><rect x="252.5" y="333.4" width="400" height="1.5" fill="#180e62"/><rect x="252.5" y="350.6" width="400" height="1.6" fill="#006400"/><rect x="252.2" y="336.6" width="1.2" height="14.6" fill="#00d000"/><rect x="252.5" y="352.7" width="400" height="1.5" fill="#180e62"/><rect x="252.5" y="369.9" width="400" height="1.6" fill="#006400"/><rect x="252.2" y="355.9" width="1.2" height="14.6" fill="#00d000"/><rect x="252.5" y="372" width="400" height="1.5" fill="#180e62"/><rect x="252.5" y="389.2" width="400" height="1.6" fill="#006400"/><rect x="252.2" y="375.2" width="1.2" height="14.6" fill="#00d000"/><rect x="252.5" y="391.3" width="400" height="1.5" fill="#180e62"/><rect x="252.5" y="408.5" width="400" height="1.6" fill="#006400"/><rect x="252.2" y="394.5" width="1.2" height="14.6" fill="#00d000"/><rect x="252.5" y="410.6" width="400" height="1.5" fill="#180e62"/><rect x="252.5" y="427.8" width="400" height="1.6" fill="#006400"/><rect x="252.2" y="413.8" width="1.2" height="14.6" fill="#00d000"/><rect x="252.5" y="429.9" width="400" height="1.5" fill="#180e62"/><rect x="252.5" y="447.1" width="400" height="1.6" fill="#006400"/><rect x="252.2" y="433.1" width="1.2" height="14.6" fill="#00d000"/><rect x="252.5" y="449.2" width="400" height="1.5" fill="#180e62"/><rect x="252.5" y="466.4" width="400" height="1.6" fill="#006400"/><rect x="252.2" y="452.4" width="1.2" height="14.6" fill="#00d000"/><rect x="252.5" y="468.5" width="400" height="1.5" fill="#180e62"/><rect x="252.5" y="485.7" width="400" height="1.6" fill="#006400"/><rect x="252.2" y="471.7" width="1.2" height="14.6" fill="#00d000"/><rect x="252.5" y="487.8" width="400" height="1.5" fill="#180e62"/><rect x="252.5" y="505" width="400" height="1.6" fill="#006400"/><rect x="252.2" y="491" width="1.2" height="14.6" fill="#00d000"/><rect x="252.5" y="507.1" width="400" height="1.5" fill="#180e62"/></g><rect x="826" y="107.2" width="6.7" height="251.6" rx="3.3" fill="#d0d1d2" stroke="#a9abad" stroke-width="0.8"/><path d="M179.5 526.2V540.2H246.5V526.2M252 526.2V540.2H836.5V95.7" fill="none" stroke="#d4d5d6" stroke-width="1"/><rect x="183" y="530.6" width="59.8" height="6" rx="3" fill="#d0d1d2" stroke="#a9abad" stroke-width="0.8"/><rect x="256" y="530.6" width="562" height="6" rx="3" fill="#d0d1d2" stroke="#a9abad" stroke-width="0.8"/></svg>
<div class="a" style="left:217px;top:871px;width:839px;height:543px;background:#eff0f1;box-shadow:0 0 2px rgba(0,0,0,.35),0 3px 22px 4px rgba(0,0,0,.45);border-radius:4px 4px 0 0"></div>
<svg class="a" style="left:217px;top:871px" width="839" height="543" viewBox="0 0 839 543"><path d="M0 4A4 4 0 0 1 4 0H835A4 4 0 0 1 839 4V38.6H0Z" fill="#dedfe0"/><rect x="0" y="38.1" width="839" height="1" fill="#c4c5c7"/><path d="M0.5 542.5V4A3.5 3.5 0 0 1 4 0.5H835A3.5 3.5 0 0 1 838.5 4V542.5Z" stroke="#fafafa" stroke-width="1" fill="none"/><text transform="translate(419.5,17) scale(1.145,1)" font-family='"Liberation Sans",sans-serif' font-size="9.7" fill="#232629" text-anchor="middle" xml:space="preserve">GTKWave - wave.ghw</text><text transform="translate(419.5,30.8) scale(1.06,1)" font-family='"Liberation Sans",sans-serif' font-size="9.3" fill="#8a8c8e" text-anchor="middle" xml:space="preserve">Marker: --  |  Cursor: 2120 ps</text><path d="M13.1 21.8L17.3 17.3L21.5 21.8Z" fill="#232629"/><path d="M43.6 17.8L51.7 17.8L47.65 22.1Z" fill="#232629"/><path d="M730.5 17V15.3H732.2M737.8 15.3H739.5V17M739.5 22.5V24.2H737.8M732.2 24.2H730.5V22.5" fill="none" stroke="#232629" stroke-width="1.2"/><rect x="732.6" y="17.4" width="4.8" height="4.7" fill="none" stroke="#232629" stroke-width="1.4"/><path d="M769.5 18.1L773.65 22.4L777.8 18.1" fill="none" stroke="#232629" stroke-width="1.1"/><path d="M794.8 22.3L798.95 18L803.1 22.3" fill="none" stroke="#232629" stroke-width="1.1"/><path d="M821 16.8L827.5 22.9M827.5 16.8L821 22.9" fill="none" stroke="#232629" stroke-width="1.1"/><path d="M12.1 54.4H32.7M12.1 63.5H32.7M12.1 72.2H32.7" fill="none" stroke="#2f3337" stroke-width="1.8"/><circle cx="55" cy="68" r="1.7" fill="none" stroke="#2f3337" stroke-width="1"/><circle cx="63" cy="68" r="1.7" fill="none" stroke="#2f3337" stroke-width="1"/><path d="M56 66.5L62.6 57.3M62 66.5L55.4 57.3" fill="none" stroke="#2f3337" stroke-width="1"/><path d="M93 68.5H90.2Q89.4 68.5 89.4 67.7V57.7Q89.4 57.1 90.2 57.1H94.5L96.3 59.5" fill="none" stroke="#2f3337" stroke-width="1"/><path d="M92.2 61.3Q92.2 60.3 93 60.3H98L101.6 64V68.9Q101.6 69.6 100.9 69.6H93Q92.2 69.6 92.2 68.9Z" fill="none" stroke="#2f3337" stroke-width="1"/><path d="M97.6 60.5V64.3H101.5" fill="none" stroke="#2f3337" stroke-width="0.9"/><rect x="127.4" y="59" width="11.6" height="10.6" rx="0.8" fill="none" stroke="#2f3337" stroke-width="1"/><rect x="129.6" y="56.8" width="7.2" height="3.2" rx="0.8" fill="#232629"/><path d="M129.8 62.6H136.6M129.8 65H136.6M129.8 67.4H132" fill="none" stroke="#2f3337" stroke-width="0.9"/><path d="M160.2 58V53.5H164.7M176 53.5H180.5V58M180.5 69V73.5H176M164.7 73.5H160.2V69" fill="none" stroke="#2f3337" stroke-width="1"/><rect x="164.8" y="58.3" width="11.1" height="10.5" fill="none" stroke="#2f3337" stroke-width="1.1"/><path d="M167.8 56.3L170.35 53.2L172.9 56.3ZM167.8 70.7L170.35 73.8L172.9 70.7ZM163.2 61L160 63.5L163.2 66ZM177.5 61L180.7 63.5L177.5 66Z" fill="#232629"/><path d="M197.6 57.3V53.9H200.6M203.3 53.9H206.1M208.3 53.9H211.3M213.5 53.9H216.5V57.3M216.5 59.5V62.5M216.5 64.5V67.5M216.5 69.8V73H213.3M211 73H208.5M206 73H204M197.6 59.5V62.5M197.6 64.5V66.5" fill="none" stroke="#2f3337" stroke-width="1.2"/><rect x="197.6" y="67.9" width="4.8" height="5.1" fill="none" stroke="#2f3337" stroke-width="1.2"/><path d="M204.6 65.8L211.3 59.2M206.5 58.3H211.7V63.5" fill="none" stroke="#2f3337" stroke-width="1.2"/><path d="M234.4 63.4V53.9H253.4V73H244.3" fill="none" stroke="#2f3337" stroke-width="1.2"/><path d="M234.4 68V65.6H236.4M239.6 65.6H241.8V68M241.8 70.8V73H239.6M236.4 73H234.4V70.8" fill="none" stroke="#2f3337" stroke-width="1.2"/><path d="M250.9 56.6L244.3 63.2M243.6 58.4V63.8H248.9" fill="none" stroke="#2f3337" stroke-width="1.2"/><path d="M273.8 57.3H282.3A8.1 8.1 0 0 1 282.6 73.5" fill="none" stroke="#2f3337" stroke-width="1.1"/><path d="M278 53L273.6 57.3L278 61.6" fill="none" stroke="#2f3337" stroke-width="1.1"/><path d="M307.8 51.9V75.1M320.5 52.2L309.8 63.5L320.5 74.8M327.5 52.2L316.8 63.5L327.5 74.8" fill="none" stroke="#2f3337" stroke-width="1.1"/><path d="M364.5 51.9V75.1M351.8 52.2L362.5 63.5L351.8 74.8M344.8 52.2L355.5 63.5L344.8 74.8" fill="none" stroke="#2f3337" stroke-width="1.1"/><path d="M397.5 52.2L385.6 63.5L397.5 74.8" fill="none" stroke="#2f3337" stroke-width="1.1"/><path d="M423 52.2L434.9 63.5L423 74.8" fill="none" stroke="#2f3337" stroke-width="1.1"/><text transform="translate(448.2,67.9) scale(1.07,1)" font-family='"Liberation Sans",sans-serif' font-size="11" fill="#232629" xml:space="preserve">From:</text><rect x="481.4" y="47.2" width="139.4" height="32" rx="2.5" fill="#fff" stroke="#bfc1c3" stroke-width="1"/><text x="488" y="67.9" font-family='"Liberation Sans",sans-serif' font-size="11" fill="#232629">0 sec</text><text x="626" y="67.9" font-family='"Liberation Sans",sans-serif' font-size="11" fill="#232629">To:</text><rect x="644.3" y="47.2" width="139.4" height="32" rx="2.5" fill="#fff" stroke="#bfc1c3" stroke-width="1"/><text x="651.4" y="67.9" font-family='"Liberation Sans",sans-serif' font-size="11" fill="#232629">7 ns</text><path d="M802 54.6A9.6 9.6 0 0 1 815.2 67.2L811.2 63.3M810.8 72A9.6 9.6 0 0 1 797.6 59.2L801.6 63.1" fill="none" stroke="#2f3337" stroke-width="1.15" stroke-linejoin="miter"/><rect x="176.1" y="85.4" width="1" height="457.6" fill="#c8c9ca"/><rect x="249" y="85.4" width="1" height="457.6" fill="#c8c9ca"/><path d="M2.8 90.9L7.15 95.3L11.5 90.9" fill="none" stroke="#2f3337" stroke-width="1"/><text x="14.1" y="97.8" font-family='"Liberation Sans",sans-serif' font-size="10.4" fill="#232629">SST</text><rect x="3.5" y="105" width="169.6" height="123" fill="#fff" stroke="#bfc1c3" stroke-width="1"/><rect x="4" y="165" width="168.6" height="20.8" fill="#c1ddf2"/><path d="M22.6 105.5V218.4" stroke="#bdbdbd" stroke-width="0.8" stroke-dasharray="1 1.5"/><path d="M23.5 113.4H30" stroke="#bdbdbd" stroke-width="0.8" stroke-dasharray="1.2 1.2"/><path d="M33.9 109.1L38.2 113.2L33.9 117.3" fill="none" stroke="#2f3337" stroke-width="1.1"/><circle cx="45.6" cy="112.8" r="3.2" fill="#8fcf6a"/><circle cx="44.9" cy="112.2" r="1.6" fill="#cdebb5"/><circle cx="51.7" cy="115.3" r="3.9" fill="#e24a52"/><circle cx="51.3" cy="115.8" r="2" fill="#f5b0b5"/><circle cx="49.6" cy="110.1" r="4.1" fill="#45afe2"/><circle cx="49.1" cy="109.7" r="2.4" fill="#c2e8f8"/><text x="57.8" y="117.1" font-family='"Liberation Sans",sans-serif' font-size="11" fill="#232629">sn2</text><path d="M23.5 134.4H30" stroke="#bdbdbd" stroke-width="0.8" stroke-dasharray="1.2 1.2"/><path d="M33.9 130.1L38.2 134.2L33.9 138.3" fill="none" stroke="#2f3337" stroke-width="1.1"/><circle cx="45.6" cy="133.8" r="3.2" fill="#8fcf6a"/><circle cx="44.9" cy="133.2" r="1.6" fill="#cdebb5"/><circle cx="51.7" cy="136.3" r="3.9" fill="#e24a52"/><circle cx="51.3" cy="136.8" r="2" fill="#f5b0b5"/><circle cx="49.6" cy="131.1" r="4.1" fill="#45afe2"/><circle cx="49.1" cy="130.7" r="2.4" fill="#c2e8f8"/><text x="57.8" y="138.1" font-family='"Liberation Sans",sans-serif' font-size="11" fill="#232629">sn1</text><path d="M23.5 155.4H35" stroke="#bdbdbd" stroke-width="0.8" stroke-dasharray="1.2 1.2"/><rect x="42.9" y="147.6" width="12.9" height="12.8" fill="#0a2404" stroke="#78c24a" stroke-width="0.8"/><path d="M45.2 147.9V160.2M47.6 147.9V160.2M50 147.9V160.2M52.4 147.9V160.2M43.2 150.4H55.6M43.2 153.1H55.6M43.2 155.8H55.6M43.2 158.4H55.6" stroke="#3b7a22" stroke-width="0.6"/><path d="M44.2 159.4L47.6 149.2H51.1L54.4 159.4" fill="none" stroke="#6ad43a" stroke-width="1.2"/><text x="57.8" y="159.1" font-family='"Liberation Sans",sans-serif' font-size="11" fill="#232629">a</text><path d="M23.5 176.4H35" stroke="#bdbdbd" stroke-width="0.8" stroke-dasharray="1.2 1.2"/><rect x="42.9" y="168.6" width="12.9" height="12.8" fill="#0a2404" stroke="#78c24a" stroke-width="0.8"/><path d="M45.2 168.9V181.2M47.6 168.9V181.2M50 168.9V181.2M52.4 168.9V181.2M43.2 171.4H55.6M43.2 174.1H55.6M43.2 176.8H55.6M43.2 179.4H55.6" stroke="#3b7a22" stroke-width="0.6"/><path d="M44.2 180.4L47.6 170.2H51.1L54.4 180.4" fill="none" stroke="#6ad43a" stroke-width="1.2"/><text x="57.8" y="180.1" font-family='"Liberation Sans",sans-serif' font-size="11" fill="#ffffff">b</text><path d="M23.5 197.4H35" stroke="#bdbdbd" stroke-width="0.8" stroke-dasharray="1.2 1.2"/><rect x="42.9" y="189.6" width="12.9" height="12.8" fill="#0a2404" stroke="#78c24a" stroke-width="0.8"/><path d="M45.2 189.9V202.2M47.6 189.9V202.2M50 189.9V202.2M52.4 189.9V202.2M43.2 192.4H55.6M43.2 195.1H55.6M43.2 197.8H55.6M43.2 200.4H55.6" stroke="#3b7a22" stroke-width="0.6"/><path d="M44.2 201.4L47.6 191.2H51.1L54.4 201.4" fill="none" stroke="#6ad43a" stroke-width="1.2"/><text x="57.8" y="201.1" font-family='"Liberation Sans",sans-serif' font-size="11" fill="#232629">d</text><path d="M23.5 218.4H35" stroke="#bdbdbd" stroke-width="0.8" stroke-dasharray="1.2 1.2"/><rect x="43.8" y="212" width="7" height="10.3" fill="#8e8e8e" stroke="#6a6a6a" stroke-width="0.5"/><path d="M50.8 211.6L55.8 210.4V224.4L50.8 222.6Z" fill="#d89a4c" stroke="#9a6428" stroke-width="0.6"/><circle cx="53.6" cy="217.4" r="0.6" fill="#f5d640"/><rect x="42.8" y="222" width="8" height="0.8" fill="#555"/><text x="57.8" y="222.1" font-family='"Liberation Sans",sans-serif' font-size="11" fill="#232629">q</text><rect x="0" y="231.1" width="176" height="1" fill="#c8c9ca"/><rect x="3.9" y="235.8" width="169" height="234.2" fill="#fff" stroke="#bfc1c3" stroke-width="1"/><rect x="4.4" y="236.3" width="168" height="25" fill="#f8f8f9"/><rect x="4.4" y="261" width="168" height="1" fill="#c9cbcc"/><text transform="translate(9,253) scale(1.04,1)" font-family='"Liberation Sans",sans-serif' font-size="10.5" fill="#232629" xml:space="preserve">Signals</text><text transform="translate(7,277.8) scale(1.1,1)" font-family='"Liberation Sans",sans-serif' font-size="10.8" fill="#232629" xml:space="preserve">[] b[31:0]</text><rect x="3.9" y="479.4" width="169.2" height="24.3" rx="3" fill="#fff" stroke="#bfc1c3" stroke-width="1"/><circle cx="15.8" cy="490" r="3.4" fill="none" stroke="#2f3337" stroke-width="1.1"/><path d="M18.3 492.5L21.9 496" fill="none" stroke="#2f3337" stroke-width="1.2"/><rect x="4.1" y="512.2" width="51" height="25.6" rx="3" fill="#f5f6f6" stroke="#bcbebf" stroke-width="1"/><text transform="translate(29.6,529.8) scale(1.1,1)" font-family='"Liberation Sans",sans-serif' font-size="10.7" fill="#232629" text-anchor="middle" xml:space="preserve">Append</text><rect x="62.7" y="512.2" width="46.9" height="25.6" rx="3" fill="#f5f6f6" stroke="#bcbebf" stroke-width="1"/><text transform="translate(86.15,529.8) scale(1.1,1)" font-family='"Liberation Sans",sans-serif' font-size="10.7" fill="#232629" text-anchor="middle" xml:space="preserve">Insert</text><rect x="117" y="512.2" width="55.8" height="25.6" rx="3" fill="#f5f6f6" stroke="#bcbebf" stroke-width="1"/><text transform="translate(144.9,529.8) scale(1.1,1)" font-family='"Liberation Sans",sans-serif' font-size="10.7" fill="#232629" text-anchor="middle" xml:space="preserve">Replace</text><path d="M214 95.7H246.8V103.5" fill="none" stroke="#c9cacb" stroke-width="1"/><text transform="translate(179,100.6) scale(1.06,1)" font-family='"Liberation Sans",sans-serif' font-size="10.4" fill="#232629" xml:space="preserve">Signals</text><path d="M286 95.7H836" fill="none" stroke="#c9cacb" stroke-width="1"/><text transform="translate(251.6,100.6) scale(1.1,1)" font-family='"Liberation Sans",sans-serif' font-size="10.4" fill="#232629" xml:space="preserve">Waves</text><rect x="179.6" y="104" width="66.6" height="439" fill="#f4f4f4"/><path d="M179 104V543M247 104V543" stroke="#cfd0d1" stroke-width="1"/><rect x="179.6" y="103.8" width="66.7" height="18.2" fill="#cbcbcb"/><text transform="translate(182.4,119.9) scale(0.93,1)" font-family='"Liberation Mono",monospace' font-size="12" fill="#111" xml:space="preserve">Time</text><rect x="179.6" y="140.3" width="66.6" height="1.2" fill="#fbfbfb"/><rect x="179.6" y="121.8" width="66.6" height="1.2" fill="#fbfbfb"/><text transform="translate(182.2,137.9) scale(0.944,1)" font-family='"Liberation Mono",monospace' font-size="12" fill="#111" xml:space="preserve">d[31:0]</text><defs><clipPath id="wc2"><rect x="252.3" y="103.8" width="569.6" height="439.2"/></clipPath></defs><rect x="252.3" y="103.8" width="569.6" height="439.2" fill="#000"/><g clip-path="url(#wc2)"><rect x="251.9" y="103.8" width="1.5" height="439.2" fill="#1e1e66"/><rect x="331.9" y="103.8" width="1.5" height="439.2" fill="#1e1e66"/><rect x="411.9" y="103.8" width="1.5" height="439.2" fill="#1e1e66"/><rect x="491.9" y="103.8" width="1.5" height="439.2" fill="#1e1e66"/><rect x="571.9" y="103.8" width="1.5" height="439.2" fill="#1e1e66"/><rect x="651.9" y="103.8" width="1.5" height="439.2" fill="#1e1e66"/><rect x="731.9" y="103.8" width="1.5" height="439.2" fill="#1e1e66"/><rect x="811.9" y="103.8" width="1.5" height="439.2" fill="#1e1e66"/><rect x="252.5" y="114.3" width="560" height="1.9" fill="#1a1a62"/><path d="M252.5 115.5V121.6M260.5 115.5V121.6M268.5 115.5V121.6M276.5 115.5V121.6M284.5 115.5V121.6M292.5 115.5V121.6M300.5 115.5V121.6M308.5 115.5V121.6M316.5 115.5V121.6M324.5 115.5V121.6M332.5 115.5V121.6M340.5 115.5V121.6M348.5 115.5V121.6M356.5 115.5V121.6M364.5 115.5V121.6M372.5 115.5V121.6M380.5 115.5V121.6M388.5 115.5V121.6M396.5 115.5V121.6M404.5 115.5V121.6M412.5 115.5V121.6M420.5 115.5V121.6M428.5 115.5V121.6M436.5 115.5V121.6M444.5 115.5V121.6M452.5 115.5V121.6M460.5 115.5V121.6M468.5 115.5V121.6M476.5 115.5V121.6M484.5 115.5V121.6M492.5 115.5V121.6M500.5 115.5V121.6M508.5 115.5V121.6M516.5 115.5V121.6M524.5 115.5V121.6M532.5 115.5V121.6M540.5 115.5V121.6M548.5 115.5V121.6M556.5 115.5V121.6M564.5 115.5V121.6M572.5 115.5V121.6M580.5 115.5V121.6M588.5 115.5V121.6M596.5 115.5V121.6M604.5 115.5V121.6M612.5 115.5V121.6M620.5 115.5V121.6M628.5 115.5V121.6M636.5 115.5V121.6M644.5 115.5V121.6M652.5 115.5V121.6M660.5 115.5V121.6M668.5 115.5V121.6M676.5 115.5V121.6M684.5 115.5V121.6M692.5 115.5V121.6M700.5 115.5V121.6M708.5 115.5V121.6M716.5 115.5V121.6M724.5 115.5V121.6M732.5 115.5V121.6M740.5 115.5V121.6M748.5 115.5V121.6M756.5 115.5V121.6M764.5 115.5V121.6M772.5 115.5V121.6M780.5 115.5V121.6M788.5 115.5V121.6M796.5 115.5V121.6M804.5 115.5V121.6M812.5 115.5V121.6" stroke="#1e1e70" stroke-width="1.1"/><text transform="translate(251.6,113) scale(0.81,1)" font-family='"Liberation Mono",monospace' font-size="10.5" fill="#e6e6e6" text-anchor="middle" xml:space="preserve">0</text><text transform="translate(331.6,113) scale(0.81,1)" font-family='"Liberation Mono",monospace' font-size="10.5" fill="#e6e6e6" text-anchor="middle" xml:space="preserve">1 ns</text><text transform="translate(411.6,113) scale(0.81,1)" font-family='"Liberation Mono",monospace' font-size="10.5" fill="#e6e6e6" text-anchor="middle" xml:space="preserve">2 ns</text><text transform="translate(491.6,113) scale(0.81,1)" font-family='"Liberation Mono",monospace' font-size="10.5" fill="#e6e6e6" text-anchor="middle" xml:space="preserve">3 ns</text><text transform="translate(571.6,113) scale(0.81,1)" font-family='"Liberation Mono",monospace' font-size="10.5" fill="#e6e6e6" text-anchor="middle" xml:space="preserve">4 ns</text><text transform="translate(651.6,113) scale(0.81,1)" font-family='"Liberation Mono",monospace' font-size="10.5" fill="#e6e6e6" text-anchor="middle" xml:space="preserve">5 ns</text><text transform="translate(731.6,113) scale(0.81,1)" font-family='"Liberation Mono",monospace' font-size="10.5" fill="#e6e6e6" text-anchor="middle" xml:space="preserve">6 ns</text><text transform="translate(811.6,113) scale(0.81,1)" font-family='"Liberation Mono",monospace' font-size="10.5" fill="#e6e6e6" text-anchor="middle" xml:space="preserve">7 ns</text><text transform="translate(254.3,136.6) scale(0.775,1)" font-family='"Liberation Mono",monospace' font-size="11" fill="#ececec" xml:space="preserve">00000000</text><text transform="translate(414.3,136.6) scale(0.775,1)" font-family='"Liberation Mono",monospace' font-size="11" fill="#ececec" xml:space="preserve">00000001</text><text transform="translate(574.3,136.6) scale(0.775,1)" font-family='"Liberation Mono",monospace' font-size="11" fill="#ececec" xml:space="preserve">00000002</text><text transform="translate(734.3,136.6) scale(0.775,1)" font-family='"Liberation Mono",monospace' font-size="11" fill="#ececec" xml:space="preserve">00000003</text><path d="M252.5 126.7L253.7 139.4H411L412.5 125.2M412.5 132.3L413.7 125.2H571L572.5 132.3M412.5 132.3L413.7 139.4H571L572.5 132.3M572.5 132.3L573.7 125.2H731L732.5 132.3M572.5 132.3L573.7 139.4H731L732.5 132.3M732.5 132.3L733.7 125.2H811M732.5 132.3L733.7 139.4H811" fill="none" stroke="#00d000" stroke-width="1.2"/><rect x="252.5" y="140.4" width="560" height="1.5" fill="#180e62"/></g><rect x="826" y="107.2" width="6.7" height="251.6" rx="3.3" fill="#d0d1d2" stroke="#a9abad" stroke-width="0.8"/></svg></div></div>
</body></html>
